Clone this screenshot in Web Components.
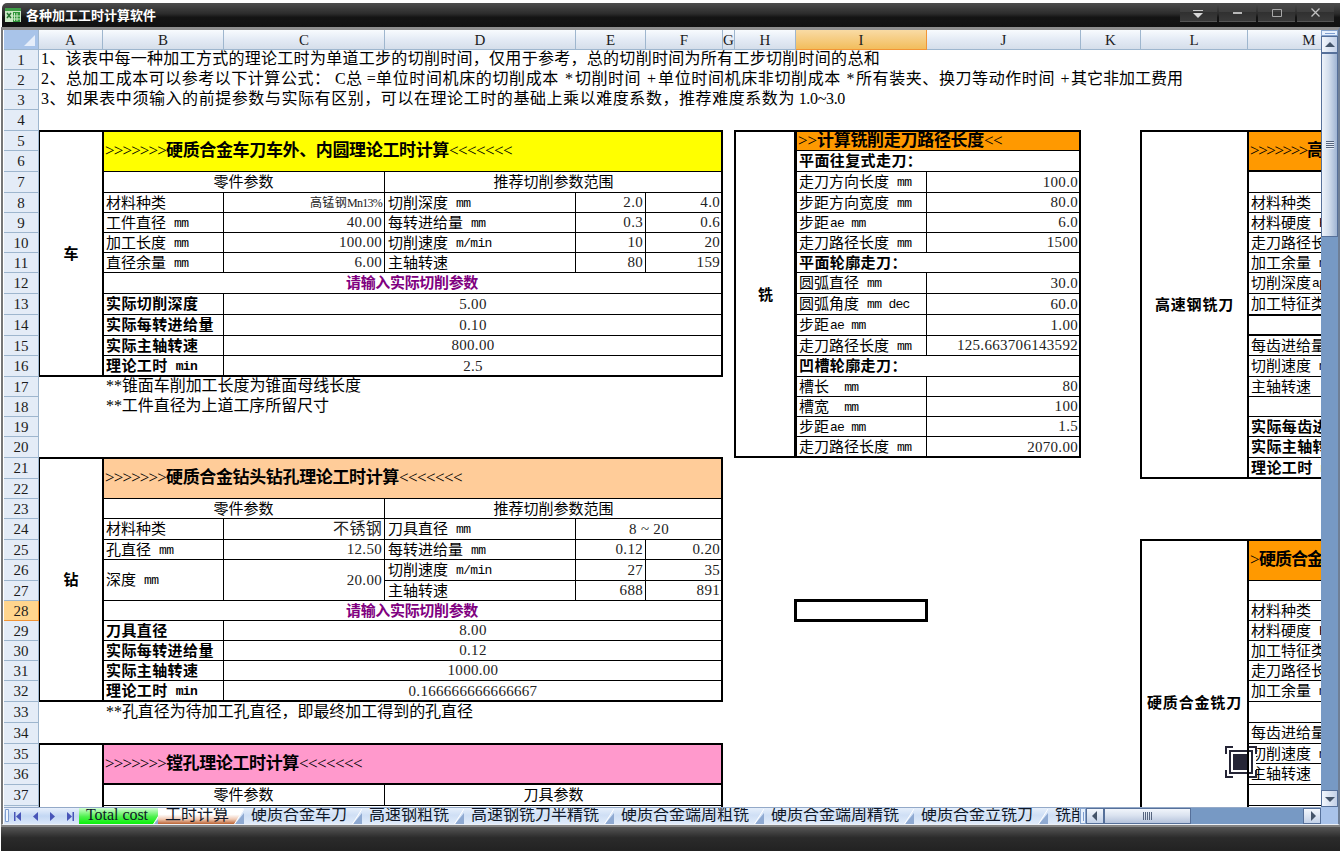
<!DOCTYPE html>
<html lang="zh-CN">
<head>
<meta charset="utf-8">
<title>各种加工工时计算软件</title>
<style>
  body {
    margin: 0;
    width: 1340px;
    height: 851px;
    overflow: hidden;
    background: #fff;
    font-family: "Liberation Serif", "Noto Sans CJK SC", serif;
  }
</style>
</head>
<body>
<app-window caption="各种加工工时计算软件">
  <work-sheet slot="sheet">
    <sheet-cell at="A1" class="note"><fit-run w="839">1、该表中每一种加工方式的理论工时为单道工步的切削时间，仅用于参考，总的切削时间为所有工步切削时间的总和</fit-run></sheet-cell>
    <sheet-cell at="A2" class="note"><fit-run w="294">2、总加工成本可以参考以下计算公式： </fit-run><fit-run w="41">C总 =</fit-run><fit-run w="183">单位时间机床的切削成本</fit-run><fit-run w="16"> *</fit-run><fit-run w="66">切削时间</fit-run><fit-run w="17"> +</fit-run><fit-run w="183">单位时间机床非切削成本</fit-run><fit-run w="15"> *</fit-run><fit-run w="199">所有装夹、换刀等动作时间</fit-run><fit-run w="16"> +</fit-run><fit-run w="112">其它非加工费用</fit-run></sheet-cell>
    <sheet-cell at="A3" class="note"><fit-run w="754">3、如果表中须输入的前提参数与实际有区别，可以在理论工时的基础上乘以难度系数，推荐难度系数为</fit-run><fit-run w="50"> 1.0~3.0</fit-run></sheet-cell>

    <sheet-cell at="A5:A16" class="side">车</sheet-cell>
    <sheet-cell at="B5:F6" class="title" fill="#ffff00"><fit-run w="61">&gt;&gt;&gt;&gt;&gt;&gt;&gt;</fit-run><b><fit-run w="283">硬质合金车刀车外、内圆理论工时计算</fit-run></b><fit-run w="63">&lt;&lt;&lt;&lt;&lt;&lt;&lt;</fit-run></sheet-cell>
    <sheet-cell at="B7:C7" class="mid">零件参数</sheet-cell>
    <sheet-cell at="D7:F7" class="mid">推荐切削参数范围</sheet-cell>
    <sheet-cell at="B8">材料种类</sheet-cell>
    <sheet-cell at="C8" class="num small"><fit-run w="37">高锰钢</fit-run><fit-run w="35">Mn13%</fit-run></sheet-cell>
    <sheet-cell at="D8" unit=" mm">切削深度</sheet-cell>
    <sheet-cell at="E8" class="num">2.0</sheet-cell>
    <sheet-cell at="F8" class="num">4.0</sheet-cell>
    <sheet-cell at="B9" unit=" mm">工件直径</sheet-cell>
    <sheet-cell at="C9" class="num">40.00</sheet-cell>
    <sheet-cell at="D9" unit=" mm">每转进给量</sheet-cell>
    <sheet-cell at="E9" class="num">0.3</sheet-cell>
    <sheet-cell at="F9" class="num">0.6</sheet-cell>
    <sheet-cell at="B10" unit=" mm">加工长度</sheet-cell>
    <sheet-cell at="C10" class="num">100.00</sheet-cell>
    <sheet-cell at="D10" unit=" m/min">切削速度</sheet-cell>
    <sheet-cell at="E10" class="num">10</sheet-cell>
    <sheet-cell at="F10" class="num">20</sheet-cell>
    <sheet-cell at="B11" unit=" mm">直径余量</sheet-cell>
    <sheet-cell at="C11" class="num">6.00</sheet-cell>
    <sheet-cell at="D11">主轴转速</sheet-cell>
    <sheet-cell at="E11" class="num">80</sheet-cell>
    <sheet-cell at="F11" class="num">159</sheet-cell>
    <sheet-cell at="B12:F12" class="ask"><fit-run w="132">请输入实际切削参数</fit-run></sheet-cell>
    <sheet-cell at="B13" class="bold">实际切削深度</sheet-cell>
    <sheet-cell at="C13:F13" class="val">5.00</sheet-cell>
    <sheet-cell at="B14" class="bold">实际每转进给量</sheet-cell>
    <sheet-cell at="C14:F14" class="val">0.10</sheet-cell>
    <sheet-cell at="B15" class="bold">实际主轴转速</sheet-cell>
    <sheet-cell at="C15:F15" class="val">800.00</sheet-cell>
    <sheet-cell at="B16" class="bold" unit=" min">理论工时</sheet-cell>
    <sheet-cell at="C16:F16" class="val">2.5</sheet-cell>
    <sheet-frame at="A5:A16" edge></sheet-frame>
    <sheet-frame at="B5:F16"></sheet-frame>
    <sheet-cell at="B17" class="note indent"><fit-run w="255">**锥面车削加工长度为锥面母线长度</fit-run></sheet-cell>
    <sheet-cell at="B18" class="note indent"><fit-run w="223">**工件直径为上道工序所留尺寸</fit-run></sheet-cell>

    <sheet-cell at="A21:A32" class="side">钻</sheet-cell>
    <sheet-cell at="B21:F22" class="title" fill="#ffcc99"><fit-run w="61">&gt;&gt;&gt;&gt;&gt;&gt;&gt;</fit-run><b><fit-run w="233">硬质合金钻头钻孔理论工时计算</fit-run></b><fit-run w="63">&lt;&lt;&lt;&lt;&lt;&lt;&lt;</fit-run></sheet-cell>
    <sheet-cell at="B23:C23" class="mid">零件参数</sheet-cell>
    <sheet-cell at="D23:F23" class="mid">推荐切削参数范围</sheet-cell>
    <sheet-cell at="B24">材料种类</sheet-cell>
    <sheet-cell at="C24" class="num big">不锈钢</sheet-cell>
    <sheet-cell at="D24" unit=" mm">刀具直径</sheet-cell>
    <sheet-cell at="E24:F24" class="val">8 ~ 20</sheet-cell>
    <sheet-cell at="B25" unit=" mm">孔直径</sheet-cell>
    <sheet-cell at="C25" class="num">12.50</sheet-cell>
    <sheet-cell at="D25" unit=" mm">每转进给量</sheet-cell>
    <sheet-cell at="E25" class="num">0.12</sheet-cell>
    <sheet-cell at="F25" class="num">0.20</sheet-cell>
    <sheet-cell at="B26:B27" unit=" mm">深度</sheet-cell>
    <sheet-cell at="C26:C27" class="num">20.00</sheet-cell>
    <sheet-cell at="D26" unit=" m/min">切削速度</sheet-cell>
    <sheet-cell at="E26" class="num">27</sheet-cell>
    <sheet-cell at="F26" class="num">35</sheet-cell>
    <sheet-cell at="D27">主轴转速</sheet-cell>
    <sheet-cell at="E27" class="num">688</sheet-cell>
    <sheet-cell at="F27" class="num">891</sheet-cell>
    <sheet-cell at="B28:F28" class="ask"><fit-run w="132">请输入实际切削参数</fit-run></sheet-cell>
    <sheet-cell at="B29" class="bold">刀具直径</sheet-cell>
    <sheet-cell at="C29:F29" class="val">8.00</sheet-cell>
    <sheet-cell at="B30" class="bold">实际每转进给量</sheet-cell>
    <sheet-cell at="C30:F30" class="val">0.12</sheet-cell>
    <sheet-cell at="B31" class="bold">实际主轴转速</sheet-cell>
    <sheet-cell at="C31:F31" class="val">1000.00</sheet-cell>
    <sheet-cell at="B32" class="bold" unit=" min">理论工时</sheet-cell>
    <sheet-cell at="C32:F32" class="val">0.166666666666667</sheet-cell>
    <sheet-frame at="A21:A32" edge></sheet-frame>
    <sheet-frame at="B21:F32"></sheet-frame>
    <sheet-cell at="B33" class="note indent"><fit-run w="367">**孔直径为待加工孔直径，即最终加工得到的孔直径</fit-run></sheet-cell>

    <sheet-cell at="B35:F36" class="title heavy" fill="#ff99cc"><fit-run w="61">&gt;&gt;&gt;&gt;&gt;&gt;&gt;</fit-run><b><fit-run w="133">镗孔理论工时计算</fit-run></b><fit-run w="63">&lt;&lt;&lt;&lt;&lt;&lt;&lt;</fit-run></sheet-cell>
    <sheet-cell at="B37:C37" class="mid">零件参数</sheet-cell>
    <sheet-cell at="D37:F37" class="mid">刀具参数</sheet-cell>
    <sheet-frame at="A35:A40" edge></sheet-frame>
    <sheet-frame at="B35:F40"></sheet-frame>

    <sheet-cell at="H5:H20" class="side">铣</sheet-cell>
    <sheet-cell at="I5:J5" class="title" fill="#ff9900"><fit-run w="19">&gt;&gt;</fit-run><b><fit-run w="167">计算铣削走刀路径长度</fit-run></b><fit-run w="18">&lt;&lt;</fit-run></sheet-cell>
    <sheet-cell at="I6:J6" class="bold">平面往复式走刀：</sheet-cell>
    <sheet-cell at="I7" unit=" mm">走刀方向长度</sheet-cell>
    <sheet-cell at="J7" class="num">100.0</sheet-cell>
    <sheet-cell at="I8" unit=" mm">步距方向宽度</sheet-cell>
    <sheet-cell at="J8" class="num">80.0</sheet-cell>
    <sheet-cell at="I9" unit="ae mm">步距</sheet-cell>
    <sheet-cell at="J9" class="num">6.0</sheet-cell>
    <sheet-cell at="I10" unit=" mm">走刀路径长度</sheet-cell>
    <sheet-cell at="J10" class="num">1500</sheet-cell>
    <sheet-cell at="I11:J11" class="bold">平面轮廓走刀：</sheet-cell>
    <sheet-cell at="I12" unit=" mm">圆弧直径</sheet-cell>
    <sheet-cell at="J12" class="num">30.0</sheet-cell>
    <sheet-cell at="I13" unit=" mm dec">圆弧角度</sheet-cell>
    <sheet-cell at="J13" class="num">60.0</sheet-cell>
    <sheet-cell at="I14" unit="ae mm">步距</sheet-cell>
    <sheet-cell at="J14" class="num">1.00</sheet-cell>
    <sheet-cell at="I15" unit=" mm">走刀路径长度</sheet-cell>
    <sheet-cell at="J15" class="num">125.663706143592</sheet-cell>
    <sheet-cell at="I16:J16" class="bold">凹槽轮廓走刀：</sheet-cell>
    <sheet-cell at="I17" unit="  mm">槽长</sheet-cell>
    <sheet-cell at="J17" class="num">80</sheet-cell>
    <sheet-cell at="I18" unit="  mm">槽宽</sheet-cell>
    <sheet-cell at="J18" class="num">100</sheet-cell>
    <sheet-cell at="I19" unit="ae mm">步距</sheet-cell>
    <sheet-cell at="J19" class="num">1.5</sheet-cell>
    <sheet-cell at="I20" unit=" mm">走刀路径长度</sheet-cell>
    <sheet-cell at="J20" class="num">2070.00</sheet-cell>
    <sheet-frame at="H5:H20"></sheet-frame>
    <sheet-frame at="I5:J20"></sheet-frame>

    <sheet-cell at="L5:L21" class="side"><fit-run w="79">高速钢铣刀</fit-run></sheet-cell>
    <sheet-cell at="M5:M6" class="title heavy" fill="#ff9900"><fit-run w="57">&gt;&gt;&gt;&gt;&gt;&gt;&gt;</fit-run><b>高</b></sheet-cell>
    <sheet-cell at="M7"></sheet-cell>
    <sheet-cell at="M8">材料种类</sheet-cell>
    <sheet-cell at="M9" unit=" HB">材料硬度</sheet-cell>
    <sheet-cell at="M10">走刀路径长</sheet-cell>
    <sheet-cell at="M11" unit=" mm">加工余量</sheet-cell>
    <sheet-cell at="M12" unit="ap">切削深度</sheet-cell>
    <sheet-cell at="M13">加工特征类</sheet-cell>
    <sheet-cell at="M14" class="heavy top"></sheet-cell>
    <sheet-cell at="M15">每齿进给量</sheet-cell>
    <sheet-cell at="M16" unit=" m/min">切削速度</sheet-cell>
    <sheet-cell at="M17">主轴转速</sheet-cell>
    <sheet-cell at="M18"></sheet-cell>
    <sheet-cell at="M19" class="bold">实际每齿进</sheet-cell>
    <sheet-cell at="M20" class="bold">实际主轴转</sheet-cell>
    <sheet-cell at="M21" class="bold" unit=" min">理论工时</sheet-cell>
    <sheet-frame at="L5:L21" open></sheet-frame>
    <sheet-frame at="M5:M21"></sheet-frame>

    <sheet-cell at="L25:L40" class="side"><fit-run w="95">硬质合金铣刀</fit-run></sheet-cell>
    <sheet-cell at="M25:M26" class="title" fill="#ff9900"><fit-run w="9">&gt;</fit-run><b><fit-run w="64">硬质合金</fit-run></b></sheet-cell>
    <sheet-cell at="M27"></sheet-cell>
    <sheet-cell at="M28">材料种类</sheet-cell>
    <sheet-cell at="M29" unit=" HB">材料硬度</sheet-cell>
    <sheet-cell at="M30">加工特征类</sheet-cell>
    <sheet-cell at="M31">走刀路径长</sheet-cell>
    <sheet-cell at="M32" unit=" mm">加工余量</sheet-cell>
    <sheet-cell at="M33"></sheet-cell>
    <sheet-cell at="M34">每齿进给量</sheet-cell>
    <sheet-cell at="M35" unit=" m/min">切削速度</sheet-cell>
    <sheet-cell at="M36">主轴转速</sheet-cell>
    <sheet-cell at="M37"></sheet-cell>
    <sheet-frame at="L25:L40" open></sheet-frame>
    <sheet-frame at="M25:M40"></sheet-frame>

    <sheet-frame at="I28" cursor></sheet-frame>
  </work-sheet>

  <scroll-bar slot="vbar" vertical></scroll-bar>

  <tab-strip slot="tabs">
    <sheet-tab color="green"><fit-run w="62">Total cost</fit-run></sheet-tab>
    <sheet-tab color="active">工时计算</sheet-tab>
    <sheet-tab>硬质合金车刀</sheet-tab>
    <sheet-tab>高速钢粗铣</sheet-tab>
    <sheet-tab>高速钢铣刀半精铣</sheet-tab>
    <sheet-tab>硬质合金端周粗铣</sheet-tab>
    <sheet-tab>硬质合金端周精铣</sheet-tab>
    <sheet-tab>硬质合金立铣刀</sheet-tab>
    <sheet-tab>铣削</sheet-tab>
  </tab-strip>
  <scroll-bar slot="hbar"></scroll-bar>
</app-window>
<capture-mark></capture-mark>

<script>
const COLS = { A: 64, B: 121, C: 161, D: 191, E: 70, F: 77, G: 12, H: 61, I: 131, J: 154, K: 60, L: 107, M: 123 };
const ROWS = [
  20, 20, 20, 21, 20, 21, 21, 20, 20, 20, 20, 21, 21, 21, 20, 21, 20, 20, 20, 21,
  21, 20, 20, 21, 20, 21, 20, 20, 20, 20, 20, 21, 21, 21, 20, 21, 21, 20, 20, 20
];

// "B5:F6" -> CSS grid-area, leaving line 1 for the headings
function gridArea(ref) {
  const [from, to = from] = ref.split(':');
  const col = (s) => s.charCodeAt(0) - 63;
  const row = (s) => Number(s.slice(1)) + 1;
  return `${row(from)} / ${col(from)} / ${row(to) + 1} / ${col(to) + 1}`;
}

// Spreads its text over a fixed width
class FitRun extends HTMLElement {
  connectedCallback() {
    this.attachShadow({ mode: 'open' }).innerHTML = `
      <style>
        :host { display: inline-block; white-space: nowrap; letter-spacing: 0; }
        span { white-space: pre; }
      </style><span><slot></slot></span>`;
    const want = Number(this.getAttribute('w'));
    const has = this.shadowRoot.querySelector('span').getBoundingClientRect().width;
    const count = [...this.textContent].length;
    this.style.letterSpacing = `${(want - has) / count}px`;
    this.style.width = `${want}px`;
  }
}

class SheetCell extends HTMLElement {
  connectedCallback() {
    this.style.gridArea = gridArea(this.getAttribute('at'));
    if (this.hasAttribute('fill')) this.style.background = this.getAttribute('fill');
    const unit = this.getAttribute('unit');
    this.attachShadow({ mode: 'open' }).innerHTML = `
      <style>
        :host {
          display: flex;
          align-items: center;
          box-sizing: border-box;
          min-width: 0;
          min-height: 0;
          padding-left: 3px;
          border: solid #000;
          border-width: 0 1px 1px 0;
          font-size: 15px;
          line-height: 18px;
          white-space: nowrap;
          color: #000;
        }
        :host(.note) { border: 0; font-size: 16px; padding: 0 0 2px 2px; }
        :host(.indent) { padding-left: 3px; }
        :host(.side) { border: 0; justify-content: center; padding: 0; font-weight: bold; }
        :host(.title) { font-size: 17px; padding-left: 2px; }
        :host(.mid) { justify-content: center; padding: 0; }
        :host(.val) { justify-content: center; padding: 0 0 1px; letter-spacing: .3px; color: #222; }
        :host(.num) { justify-content: flex-end; padding: 0 2px 1px 0; letter-spacing: .3px; color: #222; }
        :host(.small) { font-size: 12px; padding-bottom: 0; }
        :host(.big) { font-size: 16px; }
        :host(.bold) { font-weight: bold; letter-spacing: .4px; }
        :host(.ask) { justify-content: center; padding: 0; padding-right: 1px; font-weight: bold; color: #800080; }
        :host(.heavy) { border-bottom-width: 2px; }
        :host(.top) { border-top-width: 1px; }
        span { white-space: pre; }
        .unit {
          font-family: "Liberation Mono", monospace;
          font-size: 13px;
          letter-spacing: -.7px;
          margin-left: 1px;
          padding-top: 2px;
        }
      </style>
      <span><slot></slot></span>${unit ? `<span class="unit">${unit}</span>` : ''}
    `;
  }
}

// Heavy outline round a block of cells
class SheetFrame extends HTMLElement {
  connectedCallback() {
    this.style.gridArea = gridArea(this.getAttribute('at'));
    this.attachShadow({ mode: 'open' }).innerHTML = `
      <style>
        :host {
          display: block;
          box-sizing: border-box;
          margin: -1px 0 0 -1px;
          border: 2px solid #000;
          pointer-events: none;
          z-index: 1;
        }
        :host([edge]) { margin-left: 0; border-left-width: 1px; border-right: 0; }
        :host([open]) { border-right: 0; }
        :host([cursor]) { margin: -2px -1px -1px -2px; border-width: 3px; }
      </style>`;
  }
}

class WorkSheet extends HTMLElement {
  connectedCallback() {
    const cols = Object.keys(COLS).map((c, i) =>
      `<div class="col${c === 'I' ? ' on' : ''}" style="grid-area: 1 / ${i + 2}">${c}</div>`).join('');
    const rows = ROWS.map((_, i) =>
      `<div class="row${i === 27 ? ' on' : ''}" style="grid-area: ${i + 2} / 1">${i < 37 ? i + 1 : ''}</div>`).join('');
    this.attachShadow({ mode: 'open' }).innerHTML = `
      <style>
        :host {
          display: grid;
          grid-template-columns: 35px ${Object.values(COLS).map((w) => w + 'px').join(' ')};
          grid-template-rows: 20px ${ROWS.map((h) => h + 'px').join(' ')};
          overflow: hidden;
          background: #fff;
        }
        .corner { grid-area: 1 / 1; background: #a9c4e9; border-right: 1px solid #9eb6ce; border-bottom: 1px solid #9eb6ce; }
        .corner svg { display: block; }
        .col, .row { box-sizing: border-box; text-align: center; color: #1c1c1c; }
        .col {
          font-size: 15px;
          line-height: 21px;
          background: linear-gradient(#f8fbfe, #e4ebf5 50%, #d5deea);
          border-right: 1px solid #9eb6ce;
          border-bottom: 1px solid #9eb6ce;
        }
        .row {
          display: flex;
          align-items: center;
          justify-content: center;
          font-size: 15px;
          line-height: 18px;
          background: #e4ecf7;
          border-right: 1px solid #9eb6ce;
          border-bottom: 1px solid #9eb6ce;
        }
        .col.on { background: linear-gradient(#f9dba5, #f2bd5c); border-color: #f29536; }
        .row.on { background: #ffd58d; border-color: #f29536; }
      </style>
      <div class="corner"><svg width="34" height="19"><path d="M31 5V16H20z" fill="#e6eefa"/></svg></div>
      ${cols}${rows}<slot></slot>
    `;
  }
}

class ScrollBar extends HTMLElement {
  connectedCallback() {
    const vertical = this.hasAttribute('vertical');
    const arrows = vertical ? ['M2 8L7 3L12 8z', 'M2 4L7 9L12 4z'] : ['M8 2L3 7L8 12z', 'M5 2L10 7L5 12z'];
    const box = vertical ? '0 0 14 12' : '0 0 13 14';
    const [a, b] = arrows.map((d) =>
      `<svg viewBox="${box}" width="${vertical ? 14 : 13}" height="${vertical ? 12 : 14}"><path d="${d}" fill="#44546a"/></svg>`);
    this.attachShadow({ mode: 'open' }).innerHTML = `
      <style>
        :host { display: flex; background: #7799c4; }
        :host([vertical]) { flex-direction: column; }
        div {
          box-sizing: border-box;
          display: flex;
          align-items: center;
          justify-content: center;
          border: 1px solid #56709a;
          background: linear-gradient(#f3f7fd, #c3d1e8);
        }
        .split { width: 6px; border-color: #86a3cd; background: #e8f1fd; }
        .split i { width: 1px; height: 9px; background: #7f9ed0; }
        .btn { width: 18px; }
        .thumb { width: 87px; background: linear-gradient(#f1f5fb, #dbe3f0 45%, #b5c3dc); }
        .track { flex: 1; border: 0; background: none; }
        .grip { width: 9px; height: 8px; background: repeating-linear-gradient(90deg, #55647e 0 1px, transparent 1px 2px); }
        :host([vertical]) div { background: linear-gradient(90deg, #f3f7fd, #c3d1e8); }
        :host([vertical]) .split { width: auto; height: 6px; background: #e8f1fd; }
        :host([vertical]) .split i { width: 10px; height: 1px; }
        :host([vertical]) .btn { width: auto; height: 17px; }
        :host([vertical]) .thumb { width: auto; height: 184px; background: linear-gradient(90deg, #eef3fa, #d3deed 45%, #9fb4d3); }
        :host([vertical]) .track { background: none; }
        :host([vertical]) .grip { width: 8px; height: 8px; background: repeating-linear-gradient(#55647e 0 1px, #e6eef8 1px 2px); }
      </style>
      <div class="split"><i></i></div>
      <div class="btn">${a}</div>
      <div class="thumb"><i class="grip"></i></div>
      <div class="track"></div>
      <div class="btn">${b}</div>
    `;
  }
}

class SheetTab extends HTMLElement {
  connectedCallback() {
    this.attachShadow({ mode: 'open' }).innerHTML = `
      <style>
        :host {
          flex: none;
          display: flex;
          padding-left: 7px;
          font-size: 16px;
          line-height: 14px;
          white-space: nowrap;
          color: #101828;
          background: linear-gradient(#e6effb, #cfdff5 45%, #e0ebfa);
        }
        :host([color="green"]) { background: linear-gradient(#d2ffd2, #4cf04c 55%, #0af00a); margin-right: -5px; }
        :host([color="active"]) { background: linear-gradient(#fff, #fff 40%, #efc9b4 70%, #bb6333); }
        svg { display: block; margin-left: auto; }
      </style>
      <slot></slot>
      <svg width="15" height="16">
        <path d="M15 0V16H6z" fill="#d9e6f8"/>
        <path d="M15 5V16H6z" fill="#8faad2"/>
        <path d="M5.500 16L15 1" stroke="#fff" fill="none"/>
      </svg>
    `;
  }
}

class TabStrip extends HTMLElement {
  connectedCallback() {
    this.attachShadow({ mode: 'open' }).innerHTML = `
      <style>
        :host { display: flex; overflow: hidden; background: #d4e2f6; }
        .nav { flex: none; width: 75px; height: 16px; background: linear-gradient(#e8f0fc, #c3d7f3 50%, #dbe7f9); }
      </style>
      <svg class="nav" viewBox="0 0 75 16">
        <path d="M1.500 1.500h3v12h-3z" fill="#f0f6ff" stroke="#7f9ed0"/>
        <g fill="#4855b8">
          <path d="M10 4h1.500v9H10zM17 4v9l-5-4.500z"/>
          <path d="M34 4v9l-5-4.500z"/>
          <path d="M46 4v9l5-4.500z"/>
          <path d="M63 4v9l5-4.500zM68.500 4H70v9h-1.500z"/>
        </g>
      </svg>
      <slot></slot>
    `;
  }
}

class AppWindow extends HTMLElement {
  connectedCallback() {
    this.attachShadow({ mode: 'open' }).innerHTML = `
      <style>
        :host { display: flex; flex-direction: column; width: 1340px; height: 851px; }
        header {
          display: flex;
          align-items: center;
          height: 24px;
          margin: 3px 0 0 2px;
          border-radius: 5px 0 0 0;
          background: linear-gradient(#4d4d4d, #2b2b2b 45%, #141414 60%, #111);
        }
        .logo { margin-left: 3px; }
        h1 { margin: 2px auto 0 5px; font-size: 13px; line-height: 20px; color: #fff; }
        .tools { display: flex; gap: 2px; align-self: flex-start; margin-right: 6px; }
        .tools svg { background: linear-gradient(#4a4a4a, #3e3e3e 50%, #303030 50%, #3a3a3a); border-bottom: 1px solid #555; }
        .body {
          display: grid;
          grid-template-columns: 1317px 17px;
          grid-template-rows: 777px 17px;
          border: solid;
          border-width: 3px 2px 1px 2px;
          border-color: #8e8e8e #6f7f96 #eef2f8 #777;
          margin-left: 1px;
          padding-left: 1px;
          background: #fff;
          height: 794px;
        }
        .bottom { display: grid; grid-template-columns: 1076px 241px; border-top: 1px solid #93a9c8; box-sizing: border-box; min-width: 0; }
        ::slotted(tab-strip) { min-width: 0; }
        .grip { background: #a9c3ea; }
        footer {
          flex: 1;
          margin: 0 0 0 1px;
          border-top: 2px solid #848484;
          background: linear-gradient(#565656, #2b2b2b 45%, #222);
        }
      </style>
      <header>
        <svg class="logo" width="16" height="16">
          <path d="M0 1h16v14H0z" fill="#c9e8c4"/>
          <path d="M0 1h16v3H0z" fill="#3e9d46"/>
          <path d="M8 5h7v10H8z" fill="#2f9639"/>
          <path d="M9.500 6v8M12 6v8M8 9h7M8 12h7" stroke="#c9e8c4" fill="none"/>
          <path d="M2 6l4 5M6 6l-4 5" stroke="#24732e" stroke-width="1.500"/>
        </svg>
        <h1><fit-run w="130">${this.getAttribute('caption')}</fit-run></h1>
        <div class="tools">
          <svg width="37" height="18"><path d="M13 7.500h10" stroke="#c8c8c8"/><path d="M13 10h10l-5 5z" fill="#d8d8d8"/></svg>
          <svg width="37" height="18"><path d="M14 10h9" stroke="#b8b8b8" stroke-width="2"/></svg>
          <svg width="37" height="18"><path d="M14.500 6.500h9v7h-9z" stroke="#a8a8a8" fill="none"/></svg>
          <svg width="37" height="18"><path d="M14.500 5.500l8 8M22.500 5.500l-8 8" stroke="#c0c0c0" stroke-width="1.300"/></svg>
        </div>
      </header>
      <div class="body">
        <slot name="sheet"></slot>
        <slot name="vbar"></slot>
        <div class="bottom"><slot name="tabs"></slot><slot name="hbar"></slot></div>
        <div class="grip"></div>
      </div>
      <footer></footer>
    `;
  }
}

// Floating crop marker over the sheet
class CaptureMark extends HTMLElement {
  connectedCallback() {
    this.attachShadow({ mode: 'open' }).innerHTML = `
      <style>
        :host { position: absolute; left: 1225px; top: 746px; }
        svg { display: block; }
      </style>
      <svg width="32" height="32">
        <path d="M0 0h8v2h16v-2h8v8h-1v16h1v8h-8v-1H8v1H0v-8h2V8H0z" fill="#fff"/>
        <path d="M1 8V1h7M24 1h7v7M31 24v7h-7M8 31H1v-7" stroke="#252536" stroke-width="2" fill="none"/>
        <path d="M5 5h22v22H5z" stroke="#252536" stroke-width="2" fill="none"/>
        <path d="M8 8h16v16H8z" fill="#252536"/>
      </svg>
    `;
  }
}

customElements.define('app-window', AppWindow);
customElements.define('work-sheet', WorkSheet);
customElements.define('sheet-cell', SheetCell);
customElements.define('sheet-frame', SheetFrame);
customElements.define('scroll-bar', ScrollBar);
customElements.define('tab-strip', TabStrip);
customElements.define('sheet-tab', SheetTab);
customElements.define('capture-mark', CaptureMark);
customElements.define('fit-run', FitRun);
</script>
</body>
</html>
